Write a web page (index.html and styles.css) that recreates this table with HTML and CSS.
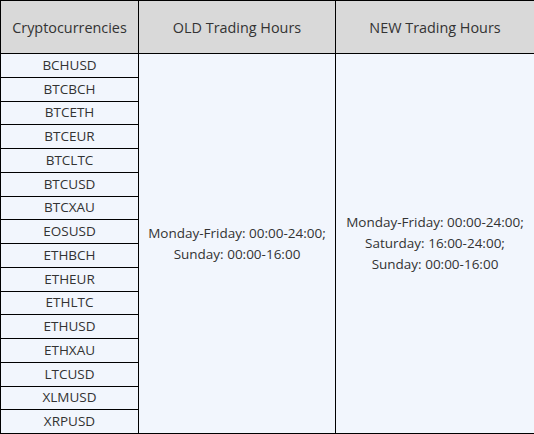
FILE: index.html
```html
<!DOCTYPE html>
<html>
<head>
<meta charset="utf-8">
<link rel="stylesheet" href="styles.css">
</head>
<body>
<table class="hours">
  <colgroup>
    <col class="c1">
    <col class="c2">
    <col class="c3">
  </colgroup>
  <thead>
    <tr><th>Cryptocurrencies</th><th>OLD Trading Hours</th><th>NEW Trading Hours</th></tr>
  </thead>
  <tbody>
    <tr><td>BCHUSD</td><td rowspan="16">Monday-Friday: 00:00-24:00;<br>Sunday: 00:00-16:00</td><td rowspan="16">Monday-Friday: 00:00-24:00;<br>Saturday: 16:00-24:00;<br>Sunday: 00:00-16:00</td></tr>
    <tr><td>BTCBCH</td></tr>
    <tr><td>BTCETH</td></tr>
    <tr><td>BTCEUR</td></tr>
    <tr><td>BTCLTC</td></tr>
    <tr><td>BTCUSD</td></tr>
    <tr><td>BTCXAU</td></tr>
    <tr><td>EOSUSD</td></tr>
    <tr><td>ETHBCH</td></tr>
    <tr><td>ETHEUR</td></tr>
    <tr><td>ETHLTC</td></tr>
    <tr><td>ETHUSD</td></tr>
    <tr><td>ETHXAU</td></tr>
    <tr><td>LTCUSD</td></tr>
    <tr><td>XLMUSD</td></tr>
    <tr><td>XRPUSD</td></tr>
  </tbody>
</table>
</body>
</html>
```
FILE: styles.css
```css
html, body {
  margin: 0;
  padding: 0;
  background: #ffffff;
}
.hours {
  border-collapse: collapse;
  width: 534px;
  table-layout: fixed;
  font-family: "Open Sans", "Noto Sans", sans-serif;
  font-size: 13.5px;
  color: #333333;
}
.c1 { width: 138px; }
.c2 { width: 197px; }
.c3 { width: 199px; }
.hours th, .hours td {
  border: 1px solid #000000;
  text-align: center;
  vertical-align: middle;
  padding: 0;
}
.hours th {
  background: #d9d9d9;
  font-weight: normal;
  font-size: 14.4px;
  height: 52px;
}
.hours td {
  background: #f2f6fd;
  height: 22.75px;
  line-height: 21px;
}
```
